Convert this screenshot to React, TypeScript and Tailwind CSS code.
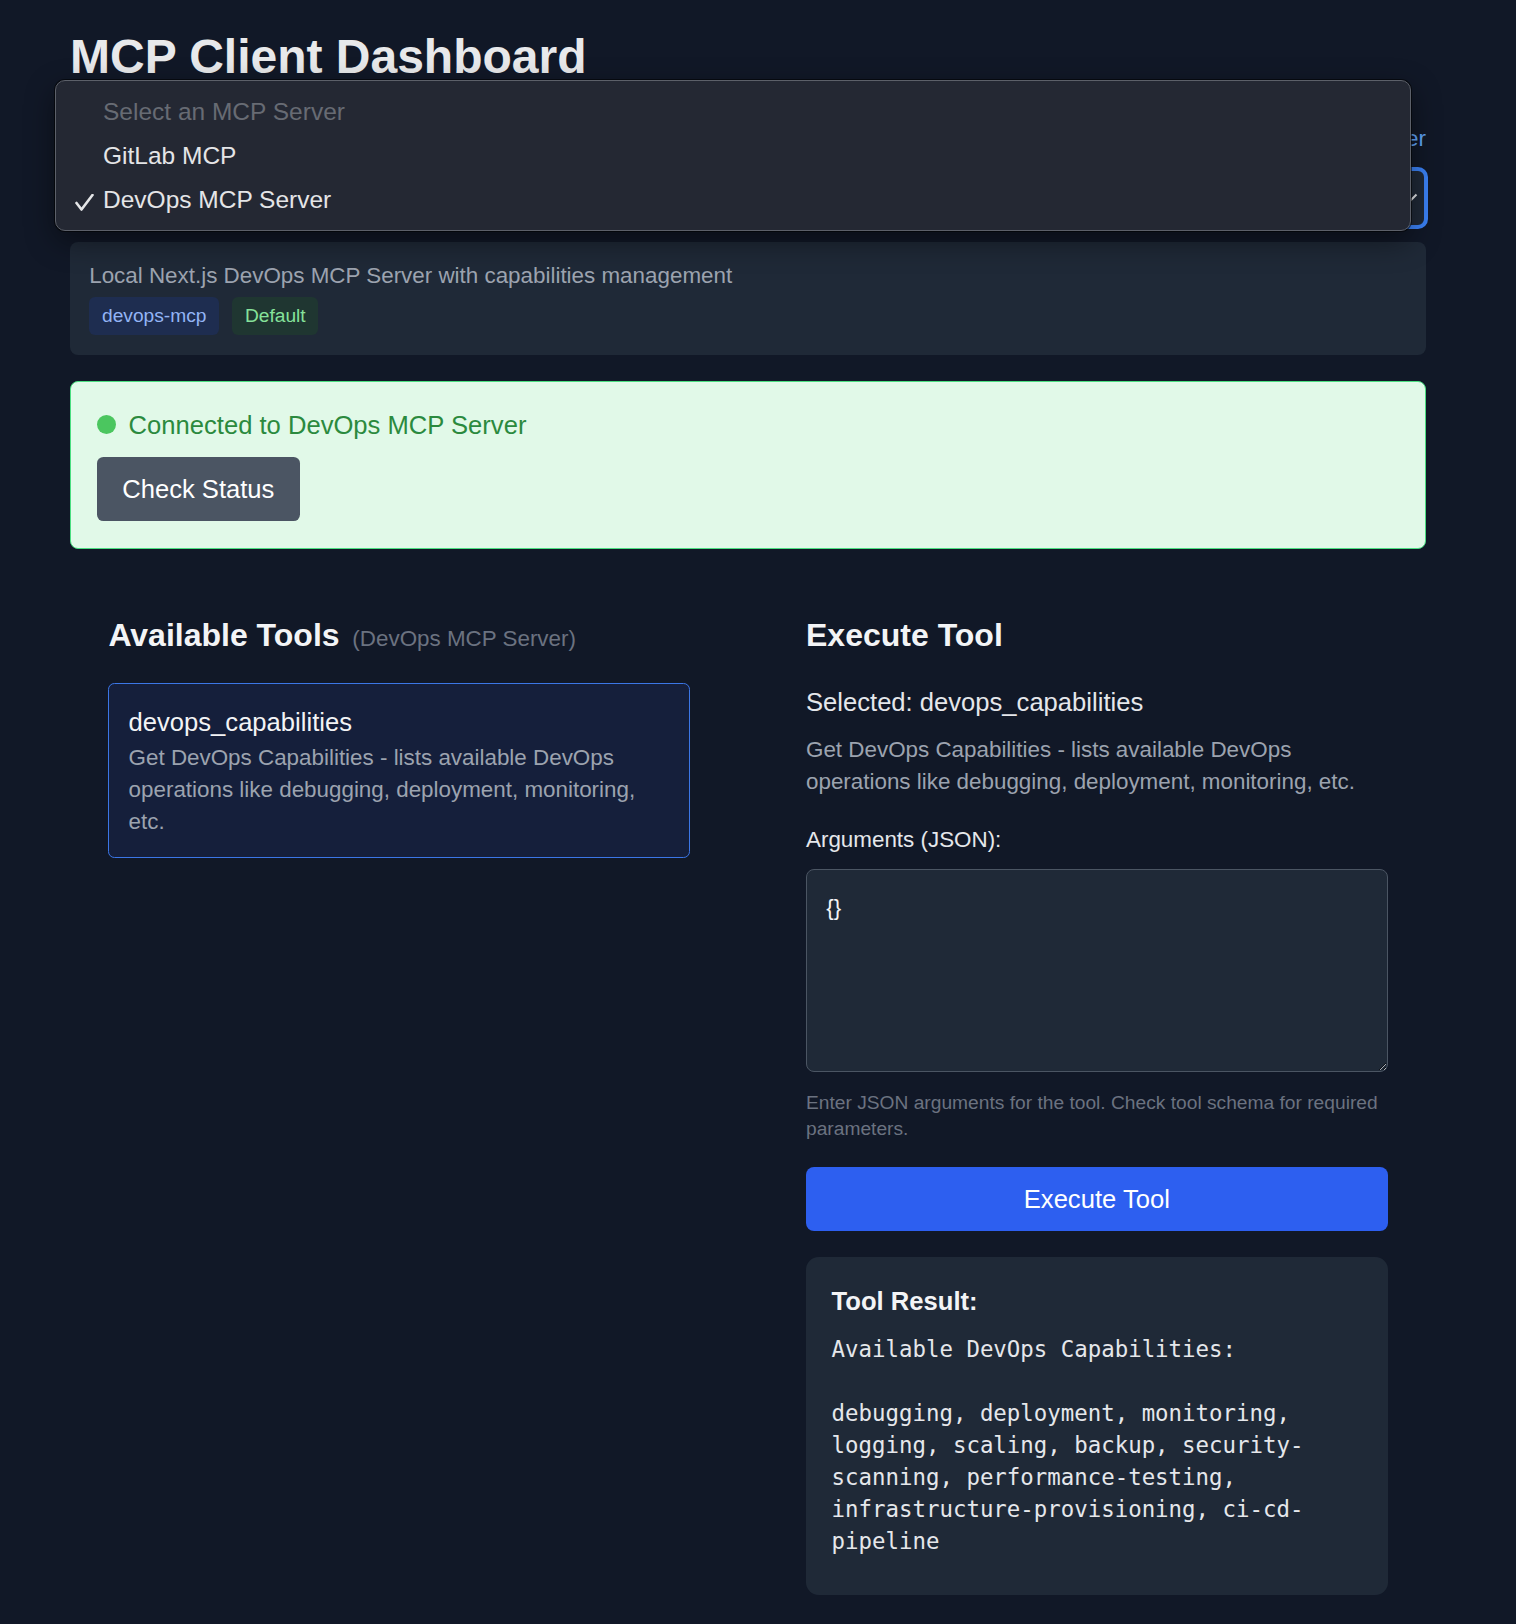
import { useState } from 'react';

const SERVERS = [
  { id: '', name: 'Select an MCP Server', disabled: true },
  { id: 'gitlab', name: 'GitLab MCP' },
  { id: 'devops-mcp', name: 'DevOps MCP Server' },
];

const CAPABILITIES = `Available DevOps Capabilities:

debugging, deployment, monitoring, logging, scaling, backup, security-scanning, performance-testing, infrastructure-provisioning, ci-cd-pipeline`;

export default function App() {
  const [server] = useState<string>('devops-mcp');
  const [args, setArgs] = useState<string>('{}');

  return (
    <div className="relative min-h-[1624px] bg-[#111827] font-['Liberation_Sans',Arial,sans-serif]">
      <div className="ml-[70px] w-[1356px] pt-[28px] pb-[28px]">
        <h1 className="text-[48px] leading-[57.6px] font-bold text-[#e8e9eb] mb-[37px]">
          MCP Client Dashboard
        </h1>

        {/* label row + select are mostly hidden by the open popup */}
        <div className="flex justify-end items-center mb-[14px] text-[22.4px] leading-[32px]">
          <span className="text-[#60a5fa]">+ Add Server</span>
        </div>

        <div className="flex items-center justify-end h-[58px] rounded-[8px] border-2 border-[#3b82f6] shadow-[0_0_0_2px_#3b82f6] bg-[#1f2937] pr-[6px]">
          <svg width="16" height="10" viewBox="0 0 16 10" className="mt-[1px]">
            <polyline points="1.5,1.5 8,8 14.5,1.5" fill="none" stroke="#e5e7eb" strokeWidth="2" />
          </svg>
        </div>

        <div className="mt-[15px] rounded-[8px] bg-[#1f2937] px-[19.2px] pt-[18px] pb-[20px]">
          <p className="text-[22.4px] leading-[32px] text-[#9ca3af]">
            Local Next.js DevOps MCP Server with capabilities management
          </p>
          <div className="flex gap-[12.8px] mt-[5px]">
            <span className="rounded-[6px] bg-[#1e2d50] px-[12.8px] py-[6.4px] text-[19.2px] leading-[25.6px] text-[#93b4f5]">
              devops-mcp
            </span>
            <span className="rounded-[6px] bg-[#1f3631] px-[12.8px] py-[6.4px] text-[19.2px] leading-[25.6px] text-[#86e29a]">
              Default
            </span>
          </div>
        </div>

        <div className="mt-[26px] rounded-[8px] border-[1.6px] border-[#4ade80] bg-[#e1f9e8] px-[25.6px] pt-[23.6px] pb-[27px]">
          <div className="flex items-center gap-[12.8px]">
            <span className="w-[19.2px] h-[19.2px] rounded-full bg-[#4bc65f]" />
            <span className="text-[25.6px] leading-[38.4px] text-[#2b8a3e]">
              Connected to DevOps MCP Server
            </span>
          </div>
          <button className="mt-[13.5px] rounded-[6.4px] bg-[#4b5563] px-[25.6px] py-[12.5px] text-[25.6px] leading-[38.4px] text-white">
            Check Status
          </button>
        </div>

        <div className="mt-[25.5px] grid grid-cols-2 gap-[116px] p-[38.4px]">
          <div>
            <h2 className="text-[32px] leading-[44.8px] font-bold text-[#f3f4f6] mb-[21.5px]">
              Available Tools
              <span className="ml-[12.8px] text-[22.4px] font-normal text-[#6b7280]">(DevOps MCP Server)</span>
            </h2>
            <div className="rounded-[6.4px] border-[1.6px] border-[#3b76e6] bg-[#151f3b] px-[19.2px] pt-[19.2px] pb-[19px]">
              <div className="text-[25.6px] leading-[38.4px] text-[#f3f4f6]">devops_capabilities</div>
              <div className="text-[22.4px] leading-[32px] text-[#9ca3af]">
                Get DevOps Capabilities - lists available DevOps operations like debugging, deployment, monitoring, etc.
              </div>
            </div>
          </div>

          <div>
            <h2 className="text-[32px] leading-[44.8px] font-bold text-[#f3f4f6] mb-[25.6px]">Execute Tool</h2>
            <div className="text-[25.6px] leading-[38.4px] text-[#e5e7eb]">Selected: devops_capabilities</div>
            <p className="mt-[12px] text-[22.4px] leading-[32px] text-[#9ca3af]">
              Get DevOps Capabilities - lists available DevOps operations like debugging, deployment, monitoring, etc.
            </p>
            <label className="block mt-[26px] mb-[13.4px] text-[22.4px] leading-[32px] text-[#e5e7eb]">
              Arguments (JSON):
            </label>
            <textarea
              value={args}
              onChange={(e) => setArgs(e.target.value)}
              className="block w-full h-[203px] rounded-[8px] border-[1.6px] border-[#4b5563] bg-[#1f2937] px-[19.2px] pt-[22px] pb-[19.2px] text-[22.4px] leading-[32px] text-[#f3f4f6] outline-none"
            />
            <p className="mt-[18px] text-[19.2px] leading-[25.6px] text-[#6b7280]">
              Enter JSON arguments for the tool. Check tool schema for required parameters.
            </p>
            <button className="mt-[26px] w-full rounded-[8px] bg-[#2d5ff0] py-[12.5px] text-[25.6px] leading-[38.4px] text-white">
              Execute Tool
            </button>
            <div className="mt-[26px] rounded-[12.8px] bg-[#1f2937] px-[25.6px] pt-[25.6px] pb-[38.7px]">
              <h3 className="text-[25.6px] leading-[38.4px] font-bold text-[#f3f4f6]">Tool Result:</h3>
              <pre className="mt-[12px] whitespace-pre-wrap font-['DejaVu_Sans_Mono',monospace] text-[22.4px] leading-[32px] text-[#e5e7eb]">
                {CAPABILITIES}
              </pre>
            </div>
          </div>
        </div>
      </div>

      {/* native select popup, open over the page */}
      <div className="absolute left-[55px] top-[80px] w-[1356px] h-[151px] rounded-[10px] border border-[#5c6069] bg-[#242833] shadow-[0_0_0_1px_rgba(0,0,0,0.55),0_10px_30px_rgba(0,0,0,0.45)] pt-[9px]">
        {SERVERS.map((s) => (
          <div key={s.id} className="flex items-center h-[44px] text-[24.5px]">
            <span className="w-[47px] flex justify-end pr-[9px]">
              {s.id === server && (
                <svg width="19" height="17" viewBox="0 0 19 17" className="mt-[4px]">
                  <polyline points="1.5,9 6.5,15.5 17.5,1" fill="none" stroke="#e4e5e7" strokeWidth="2.6" strokeLinecap="round" strokeLinejoin="round" />
                </svg>
              )}
            </span>
            <span className={s.disabled ? 'text-[#676b73]' : 'text-[#e4e5e7]'}>{s.name}</span>
          </div>
        ))}
      </div>
    </div>
  );
}
